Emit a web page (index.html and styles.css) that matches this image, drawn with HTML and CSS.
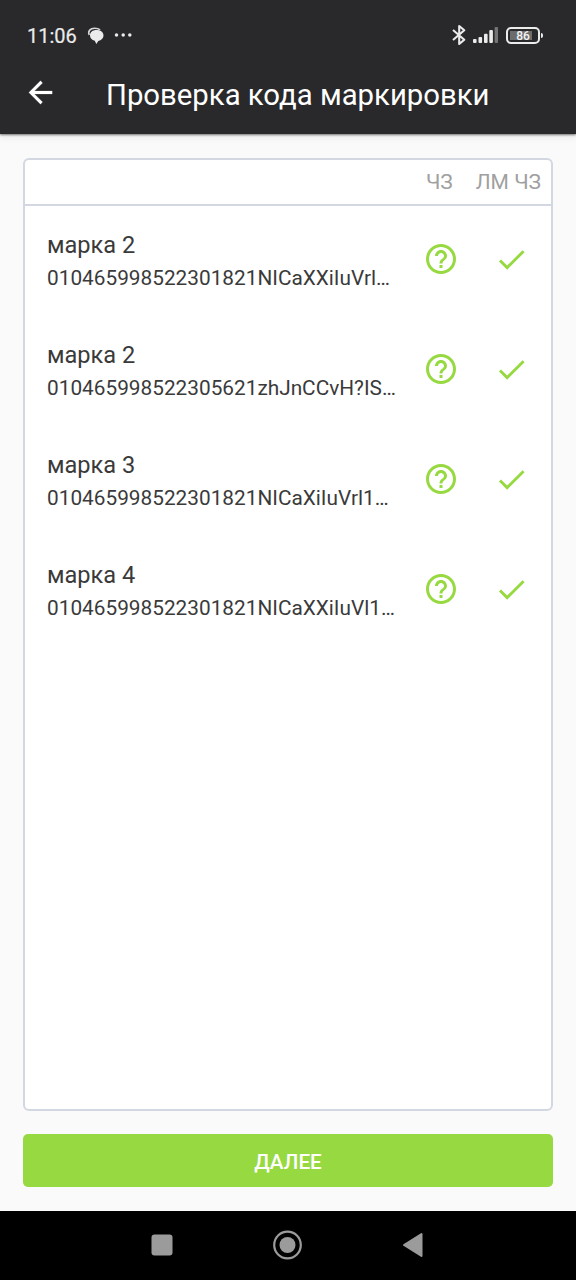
FILE: index.html
```html
<!DOCTYPE html>
<html lang="ru">
<head>
<meta charset="utf-8">
<title>Проверка кода маркировки</title>
<link rel="stylesheet" href="styles.css">
</head>
<body>
<svg class="defs" width="0" height="0">
  <symbol id="help" viewBox="0 0 24 24"><path d="M11 18h2v-2h-2v2zm1-16C6.48 2 2 6.48 2 12s4.480 10 10 10 10-4.480 10-10S17.520 2 12 2zm0 18c-4.410 0-8-3.590-8-8s3.590-8 8-8 8 3.590 8 8-3.590 8-8 8zm0-14c-2.210 0-4 1.790-4 4h2c0-1.100.9-2 2-2s2 .9 2 2c0 2-3 1.750-3 5h2c0-2.250 3-2.500 3-5 0-2.210-1.790-4-4-4z"/></symbol>
  <symbol id="check" viewBox="0 0 24 24"><path d="M9 16.170 4.830 12l-1.420 1.410L9 19 21 7l-1.410-1.410z"/></symbol>
</svg>
<div class="screen">
  <header class="top">
    <div class="status">
      <span class="clock">11:06</span>
      <svg class="chat" width="18" height="18" viewBox="0 0 18 18">
        <path d="M2.200 8C.6 3.900 3.400 1.300 7.500 1.300c2.300 0 4.200.4 5.600 1.600" fill="none" stroke="#d8d8d8" stroke-width="1.600"/>
        <path d="M9.500 3c4.200 0 7 2.200 7 5.400 0 2.900-2.200 4.900-5.200 5.500L9.300 17l-1.500-3.200C4.800 13 3 11.200 3 8.500 3 5.200 5.600 3 9.500 3z" fill="#ebebeb"/>
      </svg>
      <svg class="dots" width="20" height="6" viewBox="0 0 20 6" fill="#ebebeb"><circle cx="3.500" cy="3" r="1.750"/><circle cx="10.200" cy="3" r="1.750"/><circle cx="16.800" cy="3" r="1.750"/></svg>
      <svg class="bt" width="14" height="22" viewBox="0 0 14 22" fill="none" stroke="#ebebeb" stroke-width="2.100" stroke-linejoin="round"><path d="M1 6l11.300 9.700L7.200 20V2l5.100 4.300L1 16"/></svg>
      <svg class="signal" width="26" height="18" viewBox="0 0 26 18" fill="#ebebeb"><rect x="0" y="13" width="3.600" height="4" rx="1"/><rect x="5.500" y="11" width="3.600" height="6" rx="1"/><rect x="11" y="7.800" width="3.600" height="9.200" rx="1"/><rect x="16.300" y="4" width="3.600" height="13" rx="1"/><rect x="21.600" y="1" width="3.400" height="16" rx="1" fill="#747475"/></svg>
      <div class="battery"><span class="level">86</span></div>
      <span class="cap"></span>
    </div>
    <div class="bar">
      <svg class="back" width="35" height="35" viewBox="0 0 24 24" fill="#fff" stroke="#fff" stroke-width=".15"><path d="M20 11H7.830l5.590-5.590L12 4l-8 8 8 8 1.410-1.410L7.830 13H20v-2z"/></svg>
      <h1 class="title">Проверка кода маркировки</h1>
    </div>
  </header>
  <main class="content">
    <section class="table">
      <div class="head"><span class="col-a">ЧЗ</span><span class="col-b">ЛМ ЧЗ</span></div>
      <div class="row"><div class="info"><div class="name">марка 2</div><div class="code">010465998522301821NICaXXiIuVrl…</div></div><svg class="icon"><use href="#help"/></svg><svg class="icon tick"><use href="#check"/></svg></div>
      <div class="row"><div class="info"><div class="name">марка 2</div><div class="code">010465998522305621zhJnCCvH?IS…</div></div><svg class="icon"><use href="#help"/></svg><svg class="icon tick"><use href="#check"/></svg></div>
      <div class="row"><div class="info"><div class="name">марка 3</div><div class="code">010465998522301821NICaXiIuVrl1…</div></div><svg class="icon"><use href="#help"/></svg><svg class="icon tick"><use href="#check"/></svg></div>
      <div class="row"><div class="info"><div class="name">марка 4</div><div class="code">010465998522301821NICaXXiIuVl1…</div></div><svg class="icon"><use href="#help"/></svg><svg class="icon tick"><use href="#check"/></svg></div>
    </section>
    <button class="next">ДАЛЕЕ</button>
  </main>
  <nav class="nav">
    <svg width="22" height="22" viewBox="0 0 22 22"><rect x=".5" y=".5" width="21" height="21" rx="3" fill="#9b9b9b"/></svg>
    <svg width="30" height="30" viewBox="0 0 30 30"><circle cx="15.500" cy="15" r="13.300" fill="none" stroke="#9b9b9b" stroke-width="2.200"/><circle cx="15.500" cy="15" r="8" fill="#9b9b9b"/></svg>
    <svg width="22" height="26" viewBox="0 0 22 26"><path d="M20.500 2v22L3 13z" fill="#9b9b9b" stroke="#9b9b9b" stroke-width="2" stroke-linejoin="round"/></svg>
  </nav>
</div>
</body>
</html>
```
FILE: styles.css
```css
* { box-sizing: border-box; }
body { margin: 0; font-family: Roboto, "Noto Sans", sans-serif; }
svg { display: block; flex: none; }
.defs { position: absolute; }
.screen { width: 576px; height: 1280px; display: flex; flex-direction: column; background: #fafafb; }
.top { height: 134px; flex: none; background: #29292b; box-shadow: 0 1px 2px rgba(0, 0, 0, .5), 0 3px 7px rgba(0, 0, 0, .08); }
.status { height: 70px; padding: 0 33px 0 27px; display: flex; align-items: center; }
.clock { width: 60px; color: #ebebeb; font-size: 20px; line-height: 24px; padding-top: 2px; -webkit-text-stroke: .2px #ebebeb; }
.chat { margin-top: 1px; }
.dots { margin-left: 8px; }
.bt { margin-left: auto; }
.signal { margin-left: 7px; }
.battery { width: 34px; height: 17px; margin-left: 7px; padding: 2px; border: 2px solid #ebebeb; border-radius: 5px; background: linear-gradient(#6c6c6d, #6c6c6d) 2px 2px / 22px 9px no-repeat; }
.level { display: block; color: #f4f4f4; font-size: 12px; font-weight: 500; line-height: 10px; text-align: center; }
.cap { width: 2px; height: 5px; margin-left: 1px; border-radius: 0 2px 2px 0; background: #ebebeb; }
.bar { display: flex; align-items: center; height: 50px; padding-left: 23px; }
.back { margin-bottom: 5px; }
.title { margin: 0 0 0 48px; color: #fff; font-size: 29.300px; font-weight: 400; line-height: 34px; white-space: nowrap; }
.content { flex: 1; display: flex; flex-direction: column; gap: 23px; padding: 24px 23px; }
.table { flex: 1; border: 2px solid #d3d7e1; border-radius: 6px; background: #fff; overflow: hidden; }
.head { height: 46px; display: flex; align-items: center; justify-content: flex-end; gap: 23px; padding-right: 10px; border-bottom: 2px solid #d3d7e1; color: #a0a0a0; font-size: 21px; }
.row { height: 110px; display: flex; align-items: center; padding: 0 20px 4px 22px; }
.info { width: 350px; margin-right: 26px; padding-top: 4px; color: #3a3a3a; white-space: nowrap; }
.name { font-size: 23.600px; line-height: 32px; }
.code { font-size: 20.800px; line-height: 33px; padding-top: 1px; margin-bottom: -1px; }
.icon { width: 36px; height: 36px; fill: #97d940; }
.tick { margin-left: 35px; width: 35px; height: 35px; }
.next { height: 53px; flex: none; padding: 2px 0 0; border: 0; border-radius: 5px; background: #97d940; color: #fff; font-family: inherit; font-size: 20.700px; font-weight: 500; }
.nav { height: 69px; flex: none; display: flex; align-items: center; padding: 0 0 1px 151px; background: #000; }
.nav svg + svg { margin-left: 99px; }
```
